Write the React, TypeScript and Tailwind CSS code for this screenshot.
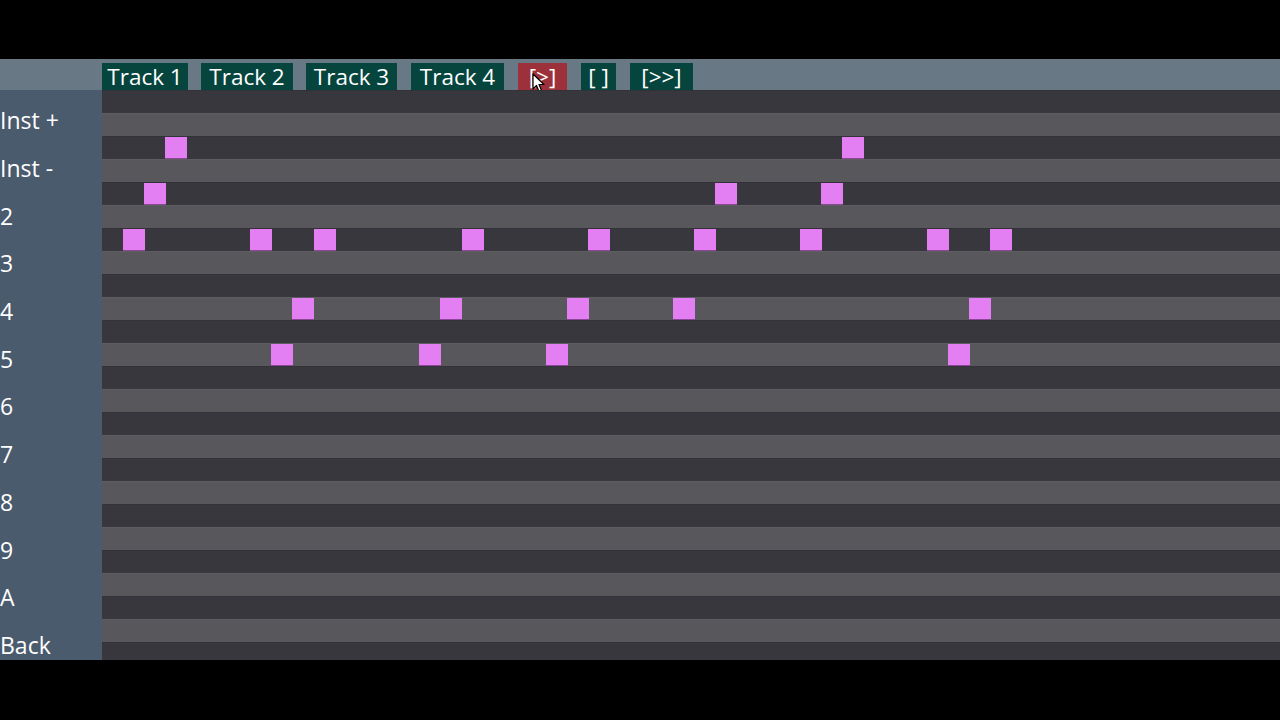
import React from 'react';

const tabs = [
  { label: 'Track 1', cls: 'w-[86px] bg-[#05453e]' },
  { label: 'Track 2', cls: 'w-[92px] ml-[13px] bg-[#05453e]' },
  { label: 'Track 3', cls: 'w-[91px] ml-[13px] bg-[#05453e]' },
  { label: 'Track 4', cls: 'w-[93px] ml-[14px] bg-[#05453e]' },
  { label: '[>]', cls: 'w-[49px] ml-[14px] bg-[#9c313b]' },
  { label: '[ ]', cls: 'w-[35px] ml-[14px] bg-[#05453e]' },
  { label: '[>>]', cls: 'w-[63px] ml-[14px] bg-[#05453e]' },
];

const labels = ['Inst +', 'Inst -', '2', '3', '4', '5', '6', '7', '8', '9', 'A', 'Back'];

// row index -> step columns that hold a note
const notes: Record<number, number[]> = {
  2: [3, 35],
  4: [2, 29, 34],
  6: [1, 7, 10, 17, 23, 28, 33, 39, 42],
  9: [9, 16, 22, 27, 41],
  11: [8, 15, 21, 40],
};

const STEP = 21.15;
const ROWS = 25;

const Cursor = () => (
  <svg width="13" height="20" viewBox="0 0 13 20" className="absolute left-[14px] top-[10px]">
    <path d="M1 1 L1 16 L4.5 12.5 L7 18.5 L9.5 17.5 L7 11.5 L12 11.5 Z" fill="#fff" stroke="#000" strokeWidth="1.2" strokeLinejoin="round" />
  </svg>
);

export default function App() {
  return (
    <div className="w-[1280px] h-[720px] bg-black flex flex-col overflow-hidden" style={{ fontFamily: '"Open Sans", "Noto Sans", sans-serif' }}>
      <div className="h-[59px] shrink-0" />

      {/* track tabs */}
      <div className="h-[31px] shrink-0 bg-[#687985] flex items-end pl-[102px]">
        {tabs.map((t) => (
          <div
            key={t.label}
            className={`relative h-[27px] ${t.cls} flex items-center justify-center text-white text-[22.5px] leading-[27px] whitespace-pre`}
          >
            {t.label}
            {t.label === '[>]' && <Cursor />}
          </div>
        ))}
      </div>

      <div className="h-[570px] shrink-0 flex">
        {/* instrument list */}
        <div className="w-[102px] bg-[#4b5b6e] pt-[7px] flex flex-col overflow-hidden">
          {labels.map((l) => (
            <div key={l} className="h-[47.7px] shrink-0 flex items-center text-white text-[23px] leading-none">
              {l}
            </div>
          ))}
        </div>

        {/* step grid */}
        <div className="flex-1 flex flex-col overflow-hidden">
          {Array.from({ length: ROWS }).map((_, r) => (
            <div
              key={r}
              className={`relative h-[23px] shrink-0 ${r % 2 === 0 ? 'bg-[#38373d] border-t border-[#333238]' : 'bg-[#58575c] border-t border-[#5e5d62]'}`}
            >
              {(notes[r] || []).map((c) => (
                <div
                  key={c}
                  className="absolute top-0 w-[22px] h-[22px] bg-[#e47ef3] border-b border-[#8a4796]"
                  style={{ left: c * STEP }}
                />
              ))}
            </div>
          ))}
        </div>
      </div>
    </div>
  );
}
